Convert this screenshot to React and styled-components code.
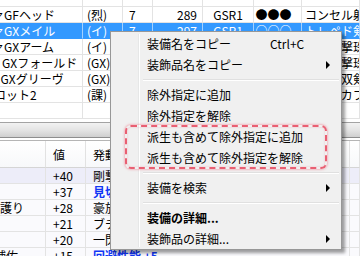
import React from "react";
import styled, { createGlobalStyle } from "styled-components";

const Global = createGlobalStyle`
  html, body { margin: 0; padding: 0; }
  body {
    width: 360px; height: 256px; overflow: hidden; background: #fff;
    font-family: "Noto Sans CJK JP", "Noto Sans", sans-serif;
  }
`;

const Screen = styled.div`
  position: relative;
  width: 360px;
  height: 256px;
  overflow: hidden;
  background: #fff;
  font-family: "Noto Sans CJK JP", "Noto Sans", sans-serif;
  font-size: 12px;
  color: #000;
  display: flex;
  flex-direction: column;
`;

const TOP_COLS = "83px 40px 30px 50px 51px 48px 1fr";
const LOW_COLS = "46px 40px 264px 1fr";

const Row = styled.div`
  display: grid;
  grid-template-columns: ${(p) => p.$cols};
  height: ${(p) => p.$h}px;
  flex: none;
  background: ${(p) => (p.$selected ? "#3399ff" : p.$bg || "transparent")};
  color: ${(p) => (p.$selected ? "#fff" : "#000")};
`;

const Cell = styled.div`
  box-sizing: border-box;
  border-right: 1px solid ${(p) => (p.$sel ? "rgba(255,255,255,0.55)" : "#e3e3e3")};
  border-bottom: 1px solid ${(p) => (p.$sel ? "#3399ff" : "#e3e3e3")};
  white-space: nowrap;
  overflow: hidden;
  line-height: 15px;
  padding: 0 ${(p) => p.$pr ?? 4}px 0 ${(p) => p.$pl ?? 4}px;
  text-align: ${(p) => p.$align || "left"};
  text-indent: ${(p) => p.$indent || 0}px;
  color: ${(p) => p.$color || "inherit"};
  font-weight: ${(p) => (p.$bold ? 700 : 400)};
`;

const Gap = styled.div`
  height: ${(p) => p.$h}px;
  flex: none;
`;

const Splitter = styled.div`
  flex: none;
  height: 14px;
  border-top: 1px solid #a3a3a3;
  border-bottom: 1px solid #8d8d8d;
  background: linear-gradient(#f2f2f2, #e4e4e4 50%, #cfcfcf);
`;

const HeaderRow = styled.div`
  display: grid;
  grid-template-columns: ${LOW_COLS};
  height: 28px;
  flex: none;
  box-sizing: border-box;
  border-top: 1px solid #b5b5b5;
  background: linear-gradient(#ffffff, #f7f8fa);
`;

const HeadCell = styled.div`
  box-sizing: border-box;
  border-right: 1px solid #e2e2e2;
  border-bottom: 1px solid #d5d5d5;
  display: flex;
  align-items: flex-end;
  padding: 0 0 4px ${(p) => p.$pl ?? 6}px;
  white-space: nowrap;
  overflow: hidden;
  line-height: 16px;
`;

const Menu = styled.div`
  position: absolute;
  left: 110px;
  top: 31px;
  width: 232px;
  box-sizing: border-box;
  border: 1px solid #979797;
  background: #f0f0f0;
  padding: 1px 2px 0 2px;
  box-shadow: 3px 3px 3px rgba(0, 0, 0, 0.38);
  display: flex;
  flex-direction: column;
  &::before {
    content: "";
    position: absolute;
    left: 27px;
    top: 2px;
    bottom: 2px;
    width: 1px;
    background: #e6e7e7;
    box-shadow: 1px 0 0 #ffffff;
  }
`;

const Item = styled.div`
  position: relative;
  display: flex;
  align-items: center;
  height: 21px;
  padding-left: 34px;
  font-weight: ${(p) => (p.$bold ? 700 : 400)};
  white-space: nowrap;
`;

const Shortcut = styled.span`
  margin-left: auto;
  width: 69px;
  font-family: "Noto Sans CJK JP", "Liberation Sans", sans-serif;
`;

const Arrow = styled.span`
  margin-left: auto;
  margin-right: 9px;
  width: 0;
  height: 0;
  border-left: 4px solid #000;
  border-top: 4px solid transparent;
  border-bottom: 4px solid transparent;
`;

const Sep = styled.div`
  position: relative;
  height: 9px;
  margin-left: 30px;
  &::after {
    content: "";
    position: absolute;
    left: 0;
    right: 0;
    top: 4px;
    height: 1px;
    background: #e0e0e0;
    box-shadow: 0 1px 0 #ffffff;
  }
`;

const Highlight = styled.div`
  position: absolute;
  left: 125px;
  top: 125px;
  width: 202px;
  height: 44px;
  box-sizing: border-box;
  border: 2px dashed rgba(232, 70, 92, 0.85);
  border-radius: 6px;
  box-shadow: 0 0 2px 1px rgba(240, 120, 135, 0.45),
    inset 0 0 2px rgba(240, 120, 135, 0.45);
  pointer-events: none;
`;

const topRows = [
  { name: "ァGFヘッド", type: "(烈)", lv: "7", def: "289", slot: "GSR1", dots: "●●●", skill: "コンセル射撃" },
  { name: "ァGXメイル", type: "(イ)", lv: "7", def: "297", slot: "GSR1", dots: "○○○", skill: "トレペド剣士", sel: true },
  { name: "ァGXアーム", type: "(イ)", lv: "7", def: "297", slot: "GSR1", dots: "○○○", skill: "攻撃射撃珠" },
  { name: "GXフォールド", type: "(GX)", lv: "7", def: "297", slot: "GSR1", dots: "○○○", skill: "防御砲撃珠", ind: 2 },
  { name: "IGXグリーヴ", type: "(GX)", lv: "7", def: "297", slot: "GSR1", dots: "○○○", skill: "斬鉄の双剣", ind: -3 },
  { name: "ロット2", type: "(課)", lv: "1", def: "10", slot: "", dots: "", skill: "スキルカフ", ind: -6 },
  { name: "", type: "", lv: "", def: "", slot: "", dots: "", skill: "" },
];

const lowRows = [
  { a: "", v: "+40", s: "剛撃" },
  { a: "", v: "+37", s: "見切り", blue: true },
  { a: "の護り", v: "+28", s: "豪放", ind: -12 },
  { a: "", v: "+21", s: "ブチギレ" },
  { a: "", v: "+20", s: "一閃" },
  { a: "補佐", v: "+15", s: "回避性能 +5", blue: true, ind: -6 },
];

export default function App() {
  return (
    <Screen>
      <Global />
      <Row $cols={TOP_COLS} $h={7}>
        {Array.from({ length: 7 }).map((_, i) => (
          <Cell key={i} />
        ))}
      </Row>
      {topRows.map((r, i) => (
        <Row key={i} $cols={TOP_COLS} $h={16} $selected={r.sel}>
          <Cell $sel={r.sel} $pl={0} $indent={r.ind ?? -8}>{r.name}</Cell>
          <Cell $sel={r.sel}>{r.type}</Cell>
          <Cell $sel={r.sel} $pl={6}>{r.lv}</Cell>
          <Cell $sel={r.sel} $align="right" $pr={5}>{r.def}</Cell>
          <Cell $sel={r.sel} $align="center">{r.slot}</Cell>
          <Cell $sel={r.sel} $align="center" $pl={0} $pr={8}>{r.dots}</Cell>
          <Cell $sel={r.sel} $pl={3}>{r.skill}</Cell>
        </Row>
      ))}
      <Gap $h={3} />
      <Splitter />
      <Gap $h={2} />
      <HeaderRow>
        <HeadCell />
        <HeadCell $pl={7}>値</HeadCell>
        <HeadCell $pl={7}>発動スキル</HeadCell>
        <HeadCell />
      </HeaderRow>
      {lowRows.map((r, i) => (
        <Row key={i} $cols={LOW_COLS} $h={16} $bg={i === 0 ? "#ededf9" : "#fafafd"}>
          <Cell $pl={0} $indent={r.ind || 0}>{r.a}</Cell>
          <Cell $pl={7}>{r.v}</Cell>
          <Cell $pl={7} $color={r.blue ? "#1136f5" : undefined} $bold={r.blue}>{r.s}</Cell>
          <Cell />
        </Row>
      ))}

      <Menu>
        <Item>
          <span>装備名をコピー</span>
          <Shortcut>Ctrl+C</Shortcut>
        </Item>
        <Item>
          <span>装飾品名をコピー</span>
          <Arrow />
        </Item>
        <Sep />
        <Item>
          <span>除外指定に追加</span>
        </Item>
        <Item>
          <span>除外指定を解除</span>
        </Item>
        <Item>
          <span>派生も含めて除外指定に追加</span>
        </Item>
        <Item>
          <span>派生も含めて除外指定を解除</span>
        </Item>
        <Sep />
        <Item>
          <span>装備を検索</span>
          <Arrow />
        </Item>
        <Sep />
        <Item $bold>
          <span>装備の詳細...</span>
        </Item>
        <Item>
          <span>装飾品の詳細...</span>
          <Arrow />
        </Item>
      </Menu>
      <Highlight />
    </Screen>
  );
}
